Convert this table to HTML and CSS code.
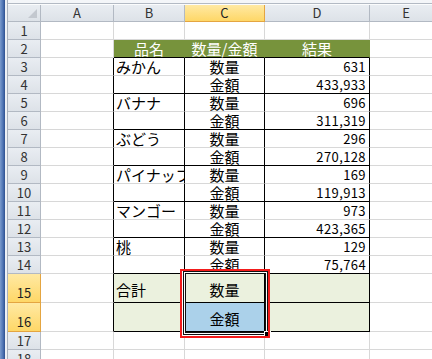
FILE: index.html
```html
<!DOCTYPE html>
<html lang="ja">
<head>
    <meta charset="UTF-8">
    <meta name="viewport" content="width=device-width, initial-scale=1.0">
    <title>集計表</title>
    <link rel="stylesheet" href="styles.css">
</head>
<body>

    <div class="frame"></div>

    <div class="main">
        <div class="top-edge"></div>

        <div class="sheet">
            <!-- column headers -->
            <div class="corner"></div>
            <div class="col-head">A</div>
            <div class="col-head">B</div>
            <div class="col-head active">C</div>
            <div class="col-head">D</div>
            <div class="col-head">E</div>

            <div class="row-head">1</div>
            <div class="cell"></div><div class="cell"></div><div class="cell"></div><div class="cell"></div><div class="cell"></div>

            <div class="row-head">2</div>
            <div class="cell"></div>
            <div class="cell title">品名</div>
            <div class="cell title">数量/金額</div>
            <div class="cell title">結果</div>
            <div class="cell"></div>

            <div class="row-head">3</div>
            <div class="cell edge"></div>
            <div class="cell box">みかん</div>
            <div class="cell box mid">数量</div>
            <div class="cell box num">631</div>
            <div class="cell"></div>

            <div class="row-head">4</div>
            <div class="cell edge"></div>
            <div class="cell box under"></div>
            <div class="cell box mid under">金額</div>
            <div class="cell box num under">433,933</div>
            <div class="cell"></div>

            <div class="row-head">5</div>
            <div class="cell edge"></div>
            <div class="cell box">バナナ</div>
            <div class="cell box mid">数量</div>
            <div class="cell box num">696</div>
            <div class="cell"></div>

            <div class="row-head">6</div>
            <div class="cell edge"></div>
            <div class="cell box under"></div>
            <div class="cell box mid under">金額</div>
            <div class="cell box num under">311,319</div>
            <div class="cell"></div>

            <div class="row-head">7</div>
            <div class="cell edge"></div>
            <div class="cell box">ぶどう</div>
            <div class="cell box mid">数量</div>
            <div class="cell box num">296</div>
            <div class="cell"></div>

            <div class="row-head">8</div>
            <div class="cell edge"></div>
            <div class="cell box under"></div>
            <div class="cell box mid under">金額</div>
            <div class="cell box num under">270,128</div>
            <div class="cell"></div>

            <div class="row-head">9</div>
            <div class="cell edge"></div>
            <div class="cell box clip">パイナップル</div>
            <div class="cell box mid">数量</div>
            <div class="cell box num">169</div>
            <div class="cell"></div>

            <div class="row-head">10</div>
            <div class="cell edge"></div>
            <div class="cell box under"></div>
            <div class="cell box mid under">金額</div>
            <div class="cell box num under">119,913</div>
            <div class="cell"></div>

            <div class="row-head">11</div>
            <div class="cell edge"></div>
            <div class="cell box">マンゴー</div>
            <div class="cell box mid">数量</div>
            <div class="cell box num">973</div>
            <div class="cell"></div>

            <div class="row-head">12</div>
            <div class="cell edge"></div>
            <div class="cell box under"></div>
            <div class="cell box mid under">金額</div>
            <div class="cell box num under">423,365</div>
            <div class="cell"></div>

            <div class="row-head">13</div>
            <div class="cell edge"></div>
            <div class="cell box">桃</div>
            <div class="cell box mid">数量</div>
            <div class="cell box num">129</div>
            <div class="cell"></div>

            <div class="row-head">14</div>
            <div class="cell edge"></div>
            <div class="cell box under"></div>
            <div class="cell box mid under">金額</div>
            <div class="cell box num under">75,764</div>
            <div class="cell"></div>

            <!-- total rows -->
            <div class="row-head active tall">15</div>
            <div class="cell edge"></div>
            <div class="cell box under total">合計</div>
            <div class="cell box mid under total">数量</div>
            <div class="cell box under total"></div>
            <div class="cell"></div>

            <div class="row-head active tall">16</div>
            <div class="cell edge"></div>
            <div class="cell box under total"></div>
            <div class="cell box mid under total picked">金額</div>
            <div class="cell box under total"></div>
            <div class="cell"></div>

            <div class="row-head">17</div>
            <div class="cell"></div><div class="cell"></div><div class="cell"></div><div class="cell"></div><div class="cell"></div>

            <div class="row-head">18</div>
            <div class="cell"></div><div class="cell"></div><div class="cell"></div><div class="cell"></div><div class="cell"></div>

            <!-- selection C15:C16 and the red mark around it -->
            <div class="selection"><span class="handle"></span></div>
            <div class="mark"></div>
        </div>
    </div>

</body>
</html>
```

FILE: styles.css
```css
body {
    margin: 0;
    height: 359px;
    overflow: hidden;
    display: flex;
    background: #fff;
    font-family: "Noto Sans CJK JP", sans-serif;
    color: #000;
}

/* window edge on the left */
.frame {
    flex: none;
    width: 8px;
    background: linear-gradient(to right, #7b9bcd 0, #4d73b3 3px, #2e4f8e 5px, #eef1f5 5px, #eef1f5 7px, #a8b1bd 7px);
}

.main {
    flex: 1;
    min-width: 0;
    display: flex;
    flex-direction: column;
}

.top-edge {
    flex: none;
    height: 5px;
    background: linear-gradient(#f4f6f9 0, #f4f6f9 3px, #b3bac4 3px, #b3bac4 4px, #fbfcfd 4px);
}

.sheet {
    position: relative;
    display: grid;
    grid-template-columns: 33px 73px 71px 80px 105px 73px;
    grid-template-rows: 17px repeat(14, 18px) 29px 29px 18px 18px;
}

.sheet > div {
    box-sizing: border-box;
    min-width: 0;
    white-space: nowrap;
}

/* headers */
.corner,
.col-head,
.row-head {
    display: flex;
    justify-content: center;
    background: linear-gradient(#e9edf2, #dde2e8);
    border-right: 1px solid #b2b9c3;
    border-bottom: 1px solid #b2b9c3;
    color: #333;
    font-size: 13px;
}

.corner {
    position: relative;
}

.corner::after {
    content: "";
    position: absolute;
    right: 3px;
    bottom: 3px;
    border-left: 9px solid transparent;
    border-bottom: 9px solid #c3c8cf;
}

.col-head {
    align-items: center;
    line-height: 16px;
}

.row-head {
    align-items: flex-end;
    line-height: 17px;
}

.col-head.active,
.row-head.active {
    background: linear-gradient(#ffe9a3, #fed767);
    border-color: #e4a541;
    color: #222;
}

.row-head.tall {
    line-height: 18px;
}

/* cells */
.cell {
    display: flex;
    align-items: flex-end;
    padding: 0 2px;
    border-right: 1px solid #d8d8d8;
    border-bottom: 1px solid #d8d8d8;
    font-size: 15px;
    line-height: 17px;
}

.clip {
    overflow: hidden;
}

.title {
    justify-content: center;
    background: #77933c;
    color: #fff;
    border-right-color: #77933c;
    border-bottom-color: #000;
}

.edge,
.box {
    border-right-color: #000;
}

.under {
    border-bottom-color: #000;
}

.mid {
    justify-content: center;
}

.num {
    justify-content: flex-end;
    padding-right: 3px;
    font-size: 13px;
    letter-spacing: 0.4px;
}

.total {
    background: #ebf1de;
    align-items: center;
    padding-top: 3px;
}

.picked {
    background: #abd1ea;
}

/* selected range */
.selection {
    position: absolute;
    left: 175px;
    top: 266px;
    width: 85px;
    height: 64px;
    box-sizing: border-box;
    border: 1px solid #111;
    outline: 1px solid #fff;
    box-shadow: inset 0 0 0 1px #fff, inset 0 0 0 2px #111;
}

.handle {
    position: absolute;
    right: -3px;
    bottom: -3px;
    width: 5px;
    height: 5px;
    background: #000;
    outline: 1px solid #fff;
}

.mark {
    position: absolute;
    left: 172px;
    top: 264px;
    width: 90px;
    height: 69px;
    box-sizing: border-box;
    border: 2px solid #f21b1b;
}
```
